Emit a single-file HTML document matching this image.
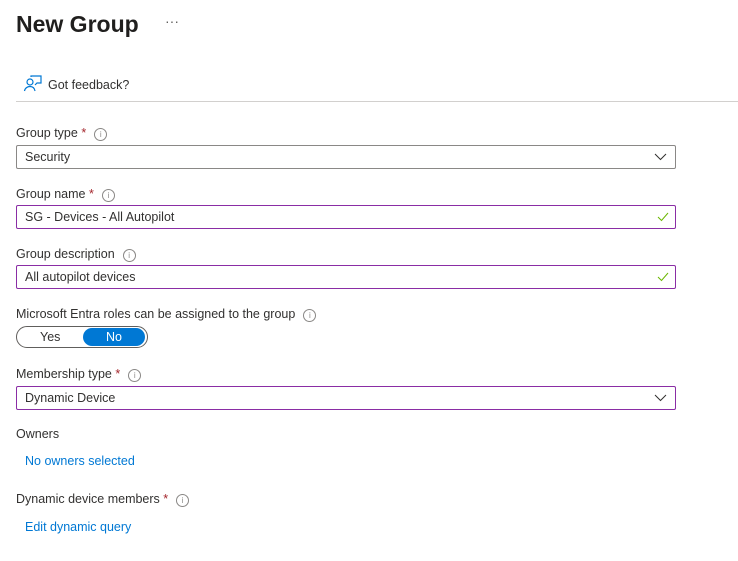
<!DOCTYPE html><html><head><style>
body{margin:0;width:738px;height:561px;background:#fff;font-family:"Liberation Sans",sans-serif;color:#323130;font-size:12.5px;position:relative;overflow:hidden}
.a{position:absolute;white-space:nowrap}
.f{position:absolute;left:16px;width:658px;height:22px;border:1px solid #8a8886;border-radius:2px}
.p{border-color:#8a2da5}
.f span{position:absolute;left:8px;top:4px}
.i{display:inline-block;width:11px;height:11px;border:1px solid #8a8886;border-radius:50%;font-size:8px;line-height:11px;text-align:center;color:#8a8886;vertical-align:0px;margin-left:8px}
.r{color:#a4262c}
.l{color:#0078d4}
</style></head><body>
<div class="a" style="left:16px;top:11px;font-size:23px;font-weight:bold;color:#201f1e">New Group</div>
<div class="a" style="left:165px;top:13px;font-size:14px;color:#605e5c">···</div>
<svg class="a" style="left:23px;top:75px" width="20" height="18" viewBox="0 0 20 18" fill="none" stroke="#0078d4" stroke-width="1.2"><circle cx="7" cy="7" r="3"/><path d="M1.5 16c.5-3 3-4.5 5.5-4.5s4.5 1.5 5 4.5"/><path d="M8 2V1h10v7h-4l-2 2"/></svg>
<div class="a" style="left:48px;top:78px">Got feedback?</div>
<div class="a" style="left:16px;top:101px;width:722px;height:1px;background:#d2d0ce"></div>
<div class="a" style="left:16px;top:126px">Group type <span class="r">*</span><span class="i">i</span></div>
<div class="f" style="top:145px"><span>Security</span><svg class="a" style="right:8px;top:7px" width="13" height="8"><path d="M1 1l5.5 5.5L12 1" fill="none" stroke="#323130"/></svg></div>
<div class="a" style="left:16px;top:187px">Group name <span class="r">*</span><span class="i">i</span></div>
<div class="f p" style="top:205px"><span>SG - Devices - All Autopilot</span><svg class="a" style="right:6px;top:6px" width="12" height="10"><path d="M1 5l3.5 3.5L11 1" fill="none" stroke="#6bb700"/></svg></div>
<div class="a" style="left:16px;top:247px">Group description<span class="i">i</span></div>
<div class="f p" style="top:265px"><span>All autopilot devices</span><svg class="a" style="right:6px;top:6px" width="12" height="10"><path d="M1 5l3.5 3.5L11 1" fill="none" stroke="#6bb700"/></svg></div>
<div class="a" style="left:16px;top:307px">Microsoft Entra roles can be assigned to the group<span class="i">i</span></div>
<div class="a" style="left:16px;top:326px;width:130px;height:20px;border:1px solid #605e5c;border-radius:11px"></div>
<div class="a" style="left:40px;top:330px">Yes</div>
<div class="a" style="left:83px;top:328px;width:62px;height:18px;background:#0078d4;border-radius:9px;color:#fff;text-align:center;line-height:18px">No</div>
<div class="a" style="left:16px;top:367px">Membership type <span class="r">*</span><span class="i">i</span></div>
<div class="f p" style="top:386px"><span>Dynamic Device</span><svg class="a" style="right:8px;top:7px" width="13" height="8"><path d="M1 1l5.5 5.5L12 1" fill="none" stroke="#323130"/></svg></div>
<div class="a" style="left:16px;top:427px">Owners</div>
<div class="a l" style="left:25px;top:454px">No owners selected</div>
<div class="a" style="left:16px;top:492px">Dynamic device members <span class="r">*</span><span class="i">i</span></div>
<div class="a l" style="left:25px;top:520px">Edit dynamic query</div>
</body></html>
